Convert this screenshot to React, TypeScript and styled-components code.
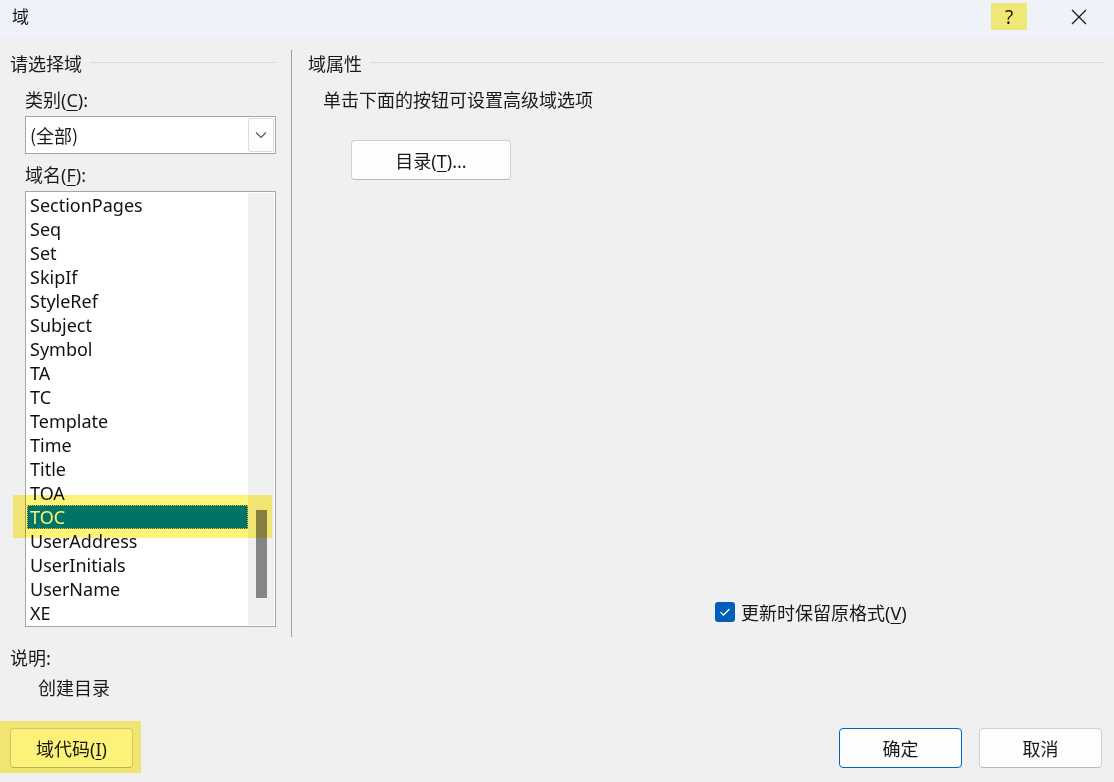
import React, { FC } from 'react';
import styled, { createGlobalStyle } from 'styled-components';

const GlobalStyle = createGlobalStyle`
  html, body {
    margin: 0;
    padding: 0;
    background: #f0f0f0;
  }
  body {
    font-family: 'Noto Sans', 'Noto Sans CJK SC', sans-serif;
    color: #1a1a1a;
  }
`;

const FIELDS = [
  'SectionPages',
  'Seq',
  'Set',
  'SkipIf',
  'StyleRef',
  'Subject',
  'Symbol',
  'TA',
  'TC',
  'Template',
  'Time',
  'Title',
  'TOA',
  'TOC',
  'UserAddress',
  'UserInitials',
  'UserName',
  'XE',
];

const Window = styled.div`
  position: relative;
  box-sizing: border-box;
  width: 1114px;
  height: 782px;
  background: #f0f0f0;
  display: flex;
  flex-direction: column;
  overflow: hidden;
  font-size: 18px;
`;

const TitleBar = styled.div`
  height: 37px;
  flex: none;
  background: #eff3f9;
  display: flex;
  align-items: center;
  padding-left: 12px;
`;

const TitleText = styled.div`
  font-family: 'Noto Sans CJK SC', sans-serif;
  font-size: 17px;
  line-height: 24px;
  flex: 1;
  margin-top: -6px;
`;

const TitleButton = styled.div<{ $w: number }>`
  width: ${(p) => p.$w}px;
  height: 30px;
  display: flex;
  align-items: center;
  justify-content: center;
  font-family: 'Noto Sans', sans-serif;
  font-size: 19px;
  color: #1a1a1a;
  margin-top: -4px;
`;

const Body = styled.div`
  flex: 1;
  display: flex;
  flex-direction: column;
  padding: 13px 10px 0 10px;
`;

const MainRow = styled.div`
  display: flex;
  height: 587px;
`;

const LeftColumn = styled.div`
  width: 266px;
  display: flex;
  flex-direction: column;
`;

const Separator = styled.div`
  width: 1px;
  background: #a0a0a0;
  margin-left: 15px;
  margin-right: 16px;
`;

const RightColumn = styled.div`
  flex: 1;
  display: flex;
  flex-direction: column;
`;

const GroupHeader = styled.div`
  display: flex;
  align-items: center;
  height: 26px;
  font-family: 'Noto Sans CJK SC', sans-serif;
  font-size: 18px;
  color: #1a1a1a;

  &::after {
    content: '';
    flex: 1;
    height: 1px;
    background: #d9d9d9;
    margin-left: 8px;
    margin-top: -1px;
  }
`;

const Label = styled.div<{ $indent: number; $top: number }>`
  font-family: 'Noto Sans CJK SC', sans-serif;
  font-size: 18px;
  line-height: 24px;
  height: 24px;
  padding-left: ${(p) => p.$indent}px;
  margin-top: ${(p) => p.$top}px;
  color: #1a1a1a;
  white-space: nowrap;
`;

const Key = styled.span`
  font-family: 'Noto Sans', sans-serif;
  text-decoration: underline;
  text-underline-offset: 3px;
`;

const Paren = styled.span`
  font-family: 'Noto Sans', sans-serif;
`;

const Select = styled.div`
  box-sizing: border-box;
  margin: 5px 0 0 15px;
  height: 38px;
  border: 1px solid #a6a6a6;
  background: #ffffff;
  display: flex;
  align-items: center;
  padding-left: 4px;
  font-size: 18px;
  font-family: 'Noto Sans CJK SC', sans-serif;
`;

const SelectValue = styled.div`
  flex: 1;
`;

const DropButton = styled.div`
  box-sizing: border-box;
  width: 26px;
  height: 34px;
  margin-right: 1px;
  border: 1px solid #dcdcdc;
  border-radius: 2px;
  background: #fdfdfd;
  display: flex;
  align-items: center;
  justify-content: center;
`;

const ListBox = styled.div`
  box-sizing: border-box;
  margin: 5px 0 0 15px;
  height: 436px;
  border: 1px solid #a6a6a6;
  background: #ffffff;
  display: flex;
  padding: 1px;
`;

const ListItems = styled.div`
  flex: 1;
  display: flex;
  flex-direction: column;
`;

const ListItem = styled.div<{ $selected?: boolean }>`
  box-sizing: border-box;
  height: 24px;
  line-height: ${(p) => (p.$selected ? 22 : 24)}px;
  padding-left: ${(p) => (p.$selected ? 2 : 3)}px;
  font-family: 'Noto Sans', sans-serif;
  font-size: 18px;
  color: ${(p) => (p.$selected ? '#ffffff' : '#111111')};
  background: ${(p) => (p.$selected ? '#0078d7' : 'transparent')};
  border: ${(p) => (p.$selected ? '1px dotted #ffc23a' : 'none')};
  white-space: nowrap;
`;

const ScrollTrack = styled.div`
  width: 26px;
  background: #f0f0f0;
  display: flex;
  justify-content: center;
`;

const ScrollThumb = styled.div`
  width: 11px;
  height: 88px;
  margin-top: 317px;
  margin-left: 1px;
  background: #858585;
`;

const Description = styled.div`
  font-family: 'Noto Sans CJK SC', sans-serif;
  font-size: 18px;
  line-height: 24px;
`;

const Hint = styled.div`
  padding-left: 28px;
  margin-top: 6px;
  font-family: 'Noto Sans CJK SC', sans-serif;
  font-size: 18px;
  line-height: 24px;
`;

const Button = styled.button<{ $width: number; $primary?: boolean }>`
  display: block;
  box-sizing: border-box;
  width: ${(p) => p.$width}px;
  height: 40px;
  border-radius: 4px;
  border: 1px solid ${(p) => (p.$primary ? '#0067c0' : '#d0d0d0')};
  border-bottom-color: ${(p) => (p.$primary ? '#0067c0' : '#b8b8b8')};
  background: #fdfdfd;
  font-family: 'Noto Sans CJK SC', sans-serif;
  font-size: 18px;
  color: #1a1a1a;
  padding: 0;
  cursor: default;
`;

const ActionButtonWrap = styled.div`
  display: flex;
  margin: 29px 0 0 43px;
`;

const CheckRow = styled.div`
  margin-top: auto;
  margin-bottom: 12px;
  margin-left: 407px;
  display: flex;
  align-items: center;
  gap: 6px;
  font-family: 'Noto Sans CJK SC', sans-serif;
  font-size: 18px;
`;

const CheckBox = styled.div`
  width: 20px;
  height: 20px;
  border-radius: 3px;
  background: #005fb8;
  display: flex;
  align-items: center;
  justify-content: center;
`;

const FooterText = styled.div`
  margin-top: 8px;
  display: flex;
  flex-direction: column;
`;

const Footer = styled.div`
  display: flex;
  align-items: center;
  margin-top: 29px;
  margin-right: 2px;
`;

const FooterRight = styled.div`
  margin-left: auto;
  display: flex;
  gap: 17px;
`;

const Marker = styled.div<{ $x: number; $y: number; $w: number; $h: number }>`
  position: absolute;
  left: ${(p) => p.$x}px;
  top: ${(p) => p.$y}px;
  width: ${(p) => p.$w}px;
  height: ${(p) => p.$h}px;
  background: #fff47a;
  mix-blend-mode: multiply;
  pointer-events: none;
`;

const Chevron: FC = () => (
  <svg width="12" height="8" viewBox="0 0 12 8">
    <path d="M1 1.5 L6 6.5 L11 1.5" fill="none" stroke="#555" strokeWidth="1.1" />
  </svg>
);

const CloseIcon: FC = () => (
  <svg width="16" height="16" viewBox="0 0 16 16">
    <path d="M1 1 L15 15 M15 1 L1 15" stroke="#1a1a1a" strokeWidth="1.3" />
  </svg>
);

const CheckIcon: FC = () => (
  <svg width="12" height="10" viewBox="0 0 12 10">
    <path d="M1.5 5.2 L4.5 8 L10.5 2" fill="none" stroke="#ffffff" strokeWidth="1.3" />
  </svg>
);

const App: FC = () => (
  <Window>
    <GlobalStyle />
    <TitleBar>
      <TitleText>域</TitleText>
      <TitleButton $w={36}>?</TitleButton>
      <TitleButton $w={34} style={{ marginLeft: 35, marginRight: 18 }}>
        <CloseIcon />
      </TitleButton>
    </TitleBar>
    <Body>
      <MainRow>
        <LeftColumn>
          <GroupHeader>请选择域</GroupHeader>
          <Label $indent={15} $top={11}>
            类别<Paren>(</Paren>
            <Key>C</Key>
            <Paren>):</Paren>
          </Label>
          <Select>
            <SelectValue>(全部)</SelectValue>
            <DropButton>
              <Chevron />
            </DropButton>
          </Select>
          <Label $indent={15} $top={8}>
            域名<Paren>(</Paren>
            <Key>F</Key>
            <Paren>):</Paren>
          </Label>
          <ListBox>
            <ListItems>
              {FIELDS.map((name) => (
                <ListItem key={name} $selected={name === 'TOC'}>
                  {name}
                </ListItem>
              ))}
            </ListItems>
            <ScrollTrack>
              <ScrollThumb />
            </ScrollTrack>
          </ListBox>
        </LeftColumn>
        <Separator />
        <RightColumn>
          <GroupHeader>域属性</GroupHeader>
          <Label $indent={15} $top={11}>
            单击下面的按钮可设置高级域选项
          </Label>
          <ActionButtonWrap>
            <Button $width={160}>
              目录<Paren>(</Paren>
              <Key>T</Key>
              <Paren>)...</Paren>
            </Button>
          </ActionButtonWrap>
          <CheckRow>
            <CheckBox>
              <CheckIcon />
            </CheckBox>
            <span>
              更新时保留原格式<Paren>(</Paren>
              <Key>V</Key>
              <Paren>)</Paren>
            </span>
          </CheckRow>
        </RightColumn>
      </MainRow>
      <FooterText>
        <Description>说明:</Description>
        <Hint>创建目录</Hint>
      </FooterText>
      <Footer>
        <Button $width={123}>
          域代码<Paren>(</Paren>
          <Key>I</Key>
          <Paren>)</Paren>
        </Button>
        <FooterRight>
          <Button $width={123} $primary>
            确定
          </Button>
          <Button $width={123}>取消</Button>
        </FooterRight>
      </Footer>
    </Body>
    <Marker $x={991} $y={3} $w={36} $h={27} />
    <Marker $x={13} $y={495} $w={259} $h={43} />
    <Marker $x={0} $y={721} $w={141} $h={52} />
  </Window>
);

export default App;
